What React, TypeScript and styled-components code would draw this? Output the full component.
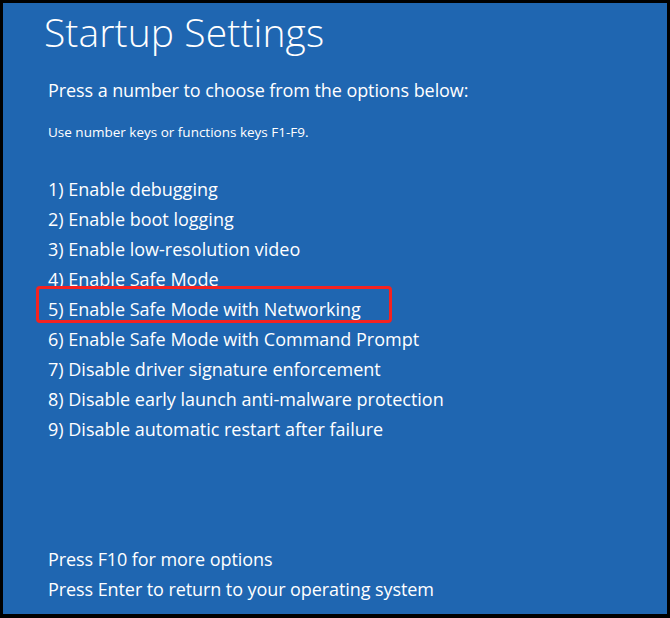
import React from "react"
import styled, { createGlobalStyle } from "styled-components"

const GlobalStyle = createGlobalStyle`
    html, body {
        margin: 0;
        padding: 0;
        background: #000000;
    }
    body {
        font-family: "Open Sans", "Noto Sans", "Liberation Sans", sans-serif;
    }
`

const Screen = styled.div`
    width: 670px;
    height: 618px;
    box-sizing: border-box;
    padding: 3px 3px 4px 3px;
    background: #000000;
`

const Panel = styled.div`
    height: 100%;
    box-sizing: border-box;
    background: #1f66b1;
    color: #ffffff;
    display: flex;
    flex-direction: column;
    padding: 0 0 0 41px;
`

const Title = styled.h1`
    margin: 4px 0 0 0;
    font-size: 39px;
    font-weight: 300;
    line-height: 50px;
    letter-spacing: 0.1px;
`

const Body = styled.div`
    padding-left: 4px;
    display: flex;
    flex-direction: column;
    flex: 1;
`

const Lead = styled.p`
    margin: 18px 0 0 0;
    font-size: 18px;
    line-height: 30px;
    letter-spacing: -0.08px;
`

const Hint = styled.p`
    margin: 17px 0 0 0;
    font-size: 13.5px;
    line-height: 20px;
    letter-spacing: 0;
`

const OptionList = styled.ol`
    list-style: none;
    margin: 32px 0 0 0;
    padding: 0;
`

const Option = styled.li<{ $marked?: boolean }>`
    position: relative;
    font-size: 18px;
    line-height: 30px;
    letter-spacing: 0;
    &::after {
        content: "";
        display: ${({ $marked }) => ($marked ? "block" : "none")};
        position: absolute;
        left: -12px;
        top: -8px;
        width: 356px;
        height: 37px;
        box-sizing: border-box;
        border: 3px solid #f5221f;
        border-radius: 4px;
    }
`

const Footer = styled.div`
    margin-top: auto;
    margin-bottom: 10px;
`

const FooterLine = styled.p`
    margin: 0;
    font-size: 18px;
    line-height: 30px;
    letter-spacing: -0.08px;
`

const options = [
    "Enable debugging",
    "Enable boot logging",
    "Enable low-resolution video",
    "Enable Safe Mode",
    "Enable Safe Mode with Networking",
    "Enable Safe Mode with Command Prompt",
    "Disable driver signature enforcement",
    "Disable early launch anti-malware protection",
    "Disable automatic restart after failure",
]

export default function App() {
    return (
        <>
            <GlobalStyle />
            <Screen>
                <Panel>
                    <Title>Startup Settings</Title>
                    <Body>
                        <Lead>Press a number to choose from the options below:</Lead>
                        <Hint>Use number keys or functions keys F1-F9.</Hint>
                        <OptionList>
                            {options.map((label, i) => (
                                <Option key={label} $marked={i === 4}>
                                    {i + 1}) {label}
                                </Option>
                            ))}
                        </OptionList>
                        <Footer>
                            <FooterLine>Press F10 for more options</FooterLine>
                            <FooterLine>Press Enter to return to your operating system</FooterLine>
                        </Footer>
                    </Body>
                </Panel>
            </Screen>
        </>
    )
}
